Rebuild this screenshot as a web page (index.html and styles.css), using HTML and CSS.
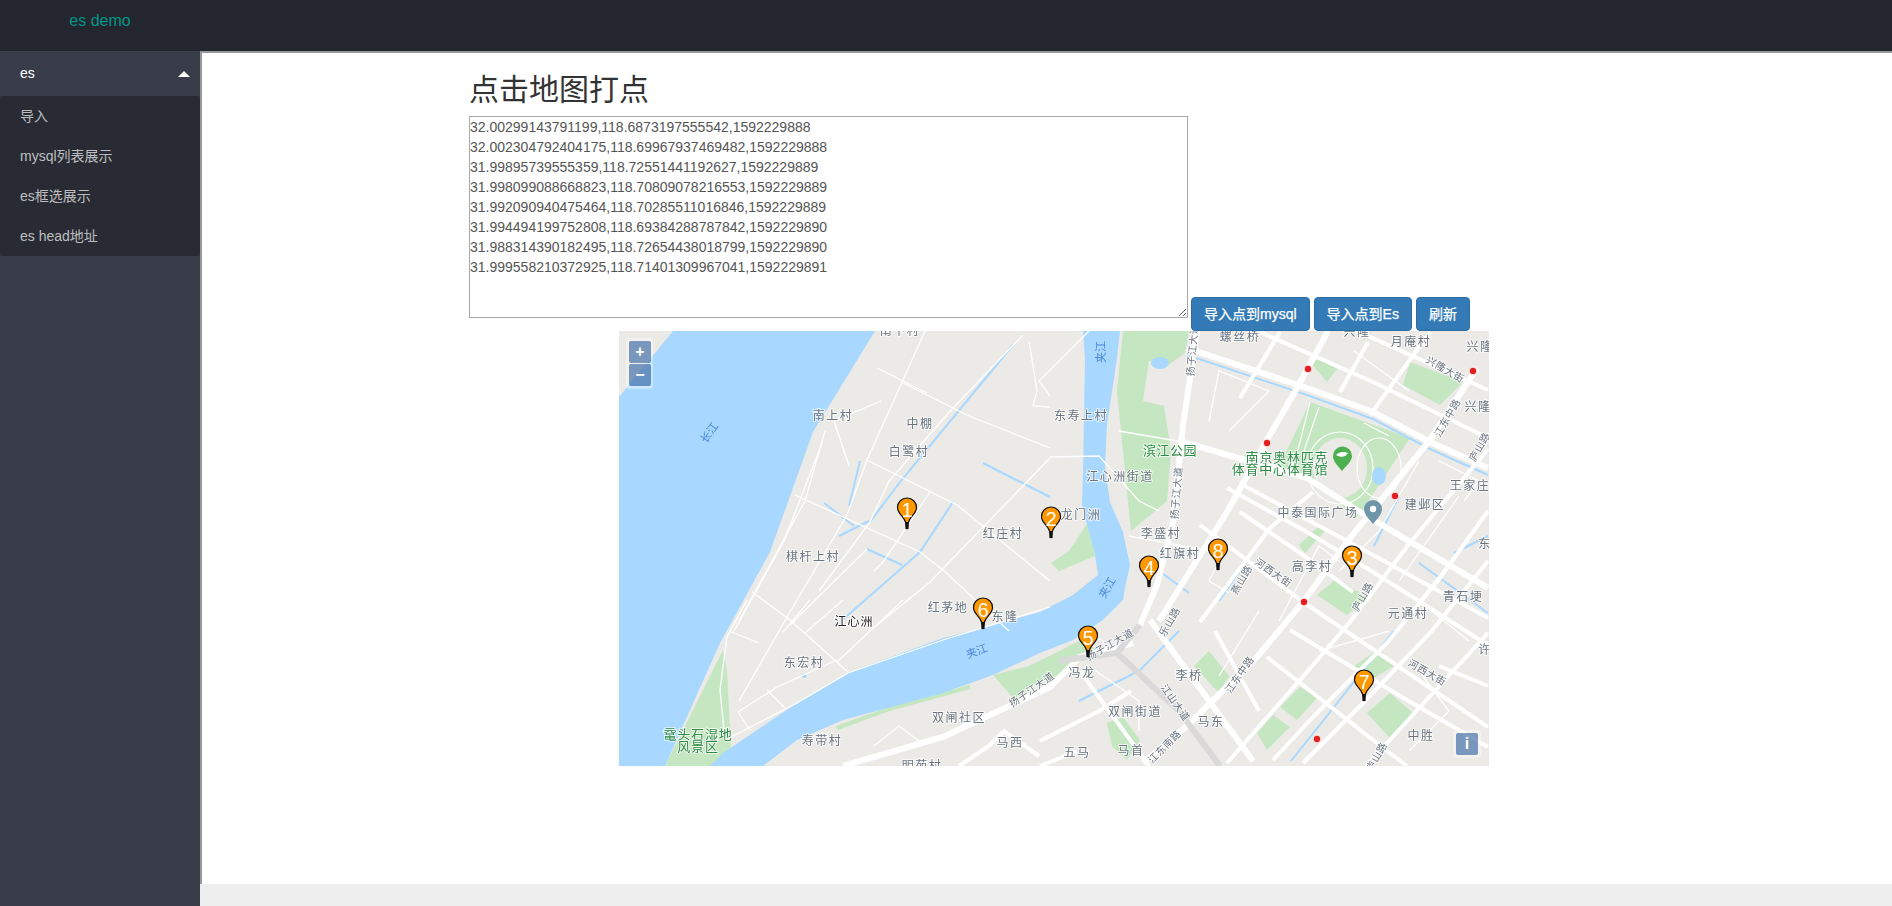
FILE: index.html
```html
<!DOCTYPE html>
<html>
<head>
<meta charset="utf-8">
<title>es demo</title>
<link rel="stylesheet" href="styles.css">
</head>
<body>
<div class="header">
  <div class="logo">es demo</div>
</div>
<div class="layout">
  <div class="side">
    <div class="nav-title">es<span class="caret"></span></div>
    <ul class="nav-child">
      <li>导入</li>
      <li>mysql列表展示</li>
      <li>es框选展示</li>
      <li>es head地址</li>
    </ul>
  </div>
  <div class="main">
    <div class="content">
      <h2>点击地图打点</h2>
      <div class="form-row">
        <textarea class="points" spellcheck="false">32.00299143791199,118.6873197555542,1592229888
32.002304792404175,118.69967937469482,1592229888
31.99895739555359,118.72551441192627,1592229889
31.998099088668823,118.70809078216553,1592229889
31.992090940475464,118.70285511016846,1592229889
31.994494199752808,118.69384288787842,1592229890
31.988314390182495,118.72654438018799,1592229890
31.999558210372925,118.71401309967041,1592229891</textarea>
        <button class="btn">导入点到mysql</button>
        <button class="btn">导入点到Es</button>
        <button class="btn">刷新</button>
      </div>
      <div class="map">
        <svg class="map-svg" viewBox="0 0 870 435" width="870" height="435">
          <defs>
            <symbol id="pin" overflow="visible">
              <path class="pin-head" d="M0 0L-1.5-7C-3-13-9.5-15-9.5-21.5A9.5 9.5 0 1 1 9.5-21.5C9.5-15 3-13 1.5-7Z"/>
              <path class="pin-tip" d="M-1.6 0V-7H1.6V0Z"/>
            </symbol>
          </defs>
          <rect class="land" width="870" height="435"/>

          <!-- parks -->
          <polygon class="park" points="104,319 46,435 100,435 112,420 108,340"/>
          <polygon class="park" points="504,0 570,0 566,22 548,35 530,30 524,70 545,75 552,120 548,170 512,200 505,130 498,60"/>
          <polygon class="park" points="691,71 791,107 738,187 714,167 661,134"/>
          <polygon class="park" points="374,344 410,335 431,325 431,345 395,368"/>
          <polygon class="park" points="421,330 460,310 478,318 440,345 421,350"/>
          <polygon class="park" points="748,382 771,362 794,382 771,407"/>
          <polygon class="park" points="661,376 681,356 698,367 678,389"/>
          <polygon class="park" points="638,402 654,384 671,396 648,419"/>
          <polygon class="park" points="488,392 504,386 521,409 508,429 493,415"/>
          <polygon class="park" points="698,264 718,247 748,267 728,284"/>
          <polygon class="park" points="784,54 791,31 844,51 821,74"/>
          <polygon class="park" points="691,31 701,28 718,38 708,51"/>
          <polygon class="park" points="590,320 610,345 600,362 575,335"/>
          <polygon class="park" points="735,335 760,318 775,335 750,350"/>
          <polygon class="park" points="680,214 700,195 706,200 686,222"/>
          <polygon class="park" points="470,190 476,225 440,240 432,232 450,220"/>
          <polyline class="park-line" points="218,397 270,378 351,356"/>

          <!-- olympic park paths -->
          <ellipse class="land" cx="721" cy="137" rx="27" ry="30"/>
          <ellipse class="path-ring" cx="721" cy="137" rx="33" ry="36"/>
          <ellipse class="path-ring" cx="760" cy="137" rx="22" ry="30"/>
          <polyline class="path-line" points="691,71 680,115 671,140"/>
          <polyline class="path-line" points="700,76 685,120"/>
          <polyline class="path-line" points="745,92 770,105"/>

          <!-- water -->
          <polygon class="water" points="54,0 256,0 194,101 151,221 111,294 101,312 46,435 0,435 0,66"/>
          <polygon class="water" points="464,0 501,0 498,27 488,94 486,137 491,171 504,201 511,234 506,257 504,269 484,289 454,309 421,322 374,344 324,362 224,389 178,409 144,435 91,435 104,422 178,372 231,341 324,307 364,297 421,281 454,264 479,244 476,224 463,174 464,141 466,27"/>
          <ellipse class="water" cx="541" cy="32" rx="9" ry="6"/>
          <ellipse class="water" cx="760" cy="145" rx="7" ry="9"/>
          <ellipse class="water" cx="185" cy="345" rx="2.5" ry="2"/>
          <polyline class="wt" points="394,14 281,151 251,191"/>
          <polyline class="wt" points="334,171 301,221 221,291"/>
          <polyline class="wt" points="364,132 431,166"/>
          <polyline class="wt" points="241,130 230,175"/>
          <polyline class="wt" points="205,172 235,195"/>
          <polyline class="wt" points="220,205 250,190"/>
          <polyline class="wt" points="248,218 283,234"/>
          <polyline class="wt" points="568,24 688,64 754,88 811,118 869,144"/>
          <polyline class="wt" points="694,161 651,197 600,270"/>
          <polyline class="wt" points="869,205 835,222"/>
          <polyline class="wt" points="780,165 755,215"/>
          <polyline class="wt" points="775,300 700,395 672,430"/>
          <polyline class="wt" points="460,370 520,340 560,300"/>
          <polyline class="wt" points="524,228 570,262"/>
          <polyline class="wt" points="800,232 869,282"/>

          <!-- roads -->
          <g class="r3">
            <polyline points="206,100 186,170 120,290"/>
            <polyline points="200,120 165,210 115,300"/>
            <polyline points="128,269 108,306 101,359 106,409"/>
            <polyline points="106,409 178,372 229,342 324,309 431,276"/>
            <polyline points="306,0 248,129 228,184 171,281 120,370"/>
            <polyline points="404,4 334,77 270,150 251,191 200,260"/>
            <polyline points="176,164 301,221 324,239 390,300"/>
            <polyline points="248,129 338,174 431,250"/>
            <polyline points="284,52 350,85 431,117"/>
            <polyline points="258,37 308,62"/>
            <polyline points="431,127 311,251 258,294"/>
            <polyline points="311,161 264,231 255,240"/>
            <polyline points="248,218 171,294"/>
            <polyline points="133,261 171,289 229,341"/>
            <polyline points="218,331 284,269"/>
            <polyline points="186,302 224,269"/>
            <polyline points="164,301 191,269"/>
            <polyline points="119,381 158,356 218,329"/>
            <polyline points="119,381 131,399"/>
            <polyline points="148,359 166,377"/>
            <polyline points="110,300 140,312"/>
            <polyline points="410,10 418,60 414,75 431,76"/>
            <polyline points="230,135 215,90 262,70"/>
            <polyline points="470,0 420,50 431,65"/>
            <polyline points="431,126 480,125 520,170 540,180"/>
            <polyline points="564,111 500,100"/>
            <polyline points="510,205 590,220"/>
            <polyline points="610,100 650,60 600,40 590,90"/>
            <polyline points="720,230 700,215 660,290"/>
            <polyline points="800,130 760,200 720,240"/>
            <polyline points="840,165 780,250"/>
            <polyline points="640,280 600,345"/>
            <polyline points="700,320 770,300"/>
            <polyline points="800,340 830,380 790,420"/>
            <polyline points="840,220 800,270 850,310"/>
            <polyline points="470,335 520,370 520,400"/>
            <polyline points="460,300 490,312"/>
            <polyline points="255,415 280,395 300,410 340,400"/>
            <polyline points="610,210 590,250 610,262"/>
            <polyline points="735,20 790,60"/>
            <polyline points="820,130 860,150 845,170"/>
          </g>
          <g class="r2">
            <polyline points="621,67 661,1"/>
            <polyline points="721,61 749,11"/>
            <polyline points="751,84 811,1"/>
            <polyline points="641,1 754,51 869,107"/>
            <polyline points="738,0 851,51 869,59"/>
            <polyline points="581,291 651,197 694,161"/>
            <polyline points="608,157 688,201 754,241 869,314"/>
            <polyline points="621,181 684,224 734,261"/>
            <polyline points="624,154 754,224 869,287"/>
            <polyline points="581,194 684,271"/>
            <polyline points="684,271 869,396"/>
            <polyline points="648,326 754,409 788,435"/>
            <polyline points="671,299 788,369 869,416"/>
            <polyline points="869,118 790,213 731,291 681,349 608,432"/>
            <polyline points="869,180 821,247 768,312 698,382 654,429"/>
            <polyline points="869,230 811,302 744,372 684,432"/>
            <polyline points="869,302 768,412 748,434"/>
            <polyline points="458,420 421,435"/>
            <polyline points="461,340 530,435"/>
            <polyline points="421,410 480,380 512,360"/>
            <polyline points="340,435 370,415 385,400 420,425"/>
            <polyline points="596,300 640,380"/>
            <polyline points="869,355 820,335"/>
          </g>
          <g class="r1">
            <polyline points="568,17 688,57 754,81 811,111 869,137"/>
            <polyline points="564,111 688,147 741,181 869,257"/>
            <polyline points="709,0 678,57 648,109 608,181 540,290"/>
            <polyline points="858,37 811,109 731,207 684,271 638,326 571,392 524,432"/>
            <polyline points="531,289 634,430"/>
            <polyline points="578,0 564,94 554,191 538,254 521,294"/>
            <polyline points="224,435 324,406 431,356 461,326 514,312"/>
          </g>
          <polyline class="expressway" points="498,322 560,380 601,435"/>
          <polyline class="expressway" points="521,294 498,322 440,330"/>

          <!-- labels -->
          <g class="lbl">
            <text x="281" y="4">南下村</text>
            <text x="214" y="89">南上村</text>
            <text x="301" y="97">中棚</text>
            <text x="290" y="125">白鹭村</text>
            <text x="194" y="230">棋杆上村</text>
            <text x="384" y="207">红庄村</text>
            <text x="329" y="281">红茅地</text>
            <text x="386" y="290">东隆</text>
            <text x="185" y="336">东宏村</text>
            <text x="203" y="414">寿带村</text>
            <text x="340" y="391">双闸社区</text>
            <text x="391" y="416">马西</text>
            <text x="303" y="439">明苑村</text>
            <text x="621" y="10">螺丝桥</text>
            <text x="738" y="5">兴隆</text>
            <text x="792" y="15">月庵村</text>
            <text x="861" y="20">兴隆</text>
            <text x="462" y="89">东寿上村</text>
            <text x="859" y="80">兴隆</text>
            <text x="501" y="150">江心洲街道</text>
            <text x="851" y="159">王家庄</text>
            <text x="806" y="178">建邺区</text>
            <text x="699" y="186">中泰国际广场</text>
            <text x="462" y="188">龙门洲</text>
            <text x="542" y="207">李盛村</text>
            <text x="561" y="227">红旗村</text>
            <text x="693" y="240">高李村</text>
            <text x="866" y="217">东</text>
            <text x="844" y="270">青石埂</text>
            <text x="789" y="287">元通村</text>
            <text x="463" y="346">冯龙</text>
            <text x="570" y="349">李桥</text>
            <text x="866" y="323">许</text>
            <text x="516" y="385">双闸街道</text>
            <text x="592" y="395">马东</text>
            <text x="802" y="409">中胜</text>
            <text x="458" y="426">五马</text>
            <text x="512" y="424">马首</text>
          </g>
          <g class="lbl lbl-road">
            <text transform="translate(826 39) rotate(30)" y="3">兴隆大街</text>
            <text transform="translate(829 87) rotate(-60)" y="3">江东中路</text>
            <text transform="translate(861 116) rotate(-60)" y="3">庐山路</text>
            <text transform="translate(654 242) rotate(35)" y="3">河西大街</text>
            <text transform="translate(623 249) rotate(-60)" y="3">燕山路</text>
            <text transform="translate(744 266) rotate(-60)" y="3">庐山路</text>
            <text transform="translate(574 19) rotate(-85)" y="3">扬子江大道</text>
            <text transform="translate(558 162) rotate(-85)" y="3">扬子江大道</text>
            <text transform="translate(551 291) rotate(-60)" y="3">乐山路</text>
            <text transform="translate(413 359) rotate(-35)" y="3">扬子江大道</text>
            <text transform="translate(621 344) rotate(-55)" y="3">江东中路</text>
            <text transform="translate(808 342) rotate(30)" y="3">河西大街</text>
            <text transform="translate(556 372) rotate(55)" y="3">江山大道</text>
            <text transform="translate(546 416) rotate(-45)" y="3">江东南路</text>
            <text transform="translate(758 426) rotate(-60)" y="3">庐山路</text>
            <text transform="translate(491 314) rotate(-30)" y="3">扬子江大道</text>
          </g>
          <g class="lbl lbl-river">
            <text transform="translate(91 102) rotate(-55)" y="3">长江</text>
            <text transform="translate(358 321) rotate(-20)" y="3">夹江</text>
            <text transform="translate(483 21) rotate(-90)" y="3">夹江</text>
            <text transform="translate(489 257) rotate(-60)" y="3">夹江</text>
          </g>
          <text class="lbl-dark" x="235" y="295">江心洲</text>
          <g class="lbl lbl-green">
            <text x="79" y="408">鼋头石湿地</text>
            <text x="79" y="420">风景区</text>
            <text x="668" y="131">南京奥林匹克</text>
            <text x="661" y="143">体育中心体育馆</text>
          </g>
          <text class="lbl-park" x="551" y="124">滨江公园</text>

          <!-- poi -->
          <g class="metro">
            <circle cx="689" cy="38" r="3.8"/>
            <circle cx="854" cy="40" r="3.8"/>
            <circle cx="648" cy="112" r="3.8"/>
            <circle cx="776" cy="165" r="3.8"/>
            <circle cx="685" cy="271" r="3.8"/>
            <circle cx="698" cy="408" r="3.8"/>
          </g>
          <path class="poi-green" d="M723 140C718 134 714 130 714 125A9.5 9.5 0 0 1 733 125C733 130 728 134 723 140Z"/>
          <path class="poi-white" d="M717 124C720 121 724 120 729 122C727 126 722 127 717 124Z"/>
          <path class="poi-gray" d="M754 193C749 187 745 183 745 178A9 9 0 0 1 763 178C763 183 759 187 754 193Z"/>
          <circle class="poi-white" cx="754" cy="178" r="3.2"/>

          <!-- markers -->
          <g class="pin" transform="translate(288 198)"><use href="#pin"/><text y="-12">1</text></g>
          <g class="pin" transform="translate(432 207)"><use href="#pin"/><text y="-12">2</text></g>
          <g class="pin" transform="translate(733 246)"><use href="#pin"/><text y="-12">3</text></g>
          <g class="pin" transform="translate(530 256)"><use href="#pin"/><text y="-12">4</text></g>
          <g class="pin" transform="translate(469 326)"><use href="#pin"/><text y="-12">5</text></g>
          <g class="pin" transform="translate(364 298)"><use href="#pin"/><text y="-12">6</text></g>
          <g class="pin" transform="translate(745 370)"><use href="#pin"/><text y="-12">7</text></g>
          <g class="pin" transform="translate(599 239)"><use href="#pin"/><text y="-12">8</text></g>
        </svg>
        <div class="zoom-ctl">
          <button class="map-btn">+</button>
          <button class="map-btn">−</button>
        </div>
        <div class="info-ctl"><button class="map-btn">i</button></div>
      </div>
    </div>
    <div class="footer"></div>
  </div>
</div>
</body>
</html>
```

FILE: styles.css
```css
* {
  box-sizing: border-box;
}

html, body {
  height: 100%;
  margin: 0;
  overflow: hidden;
}

body {
  display: flex;
  flex-direction: column;
  font-family: "Liberation Sans", "Noto Sans CJK SC", sans-serif;
  font-size: 14px;
  color: #333;
  background: #fff;
}

.header {
  height: 51px;
  flex: none;
  background: #23262e;
}

.logo {
  width: 200px;
  height: 42px;
  line-height: 42px;
  text-align: center;
  font-size: 16px;
  color: #009688;
}

.layout {
  flex: 1;
  display: flex;
  min-height: 0;
}

.side {
  width: 200px;
  flex: none;
  background: #393d49;
}

.nav-title {
  height: 45px;
  line-height: 45px;
  padding-left: 20px;
  color: #fff;
  position: relative;
}

.caret {
  position: absolute;
  right: 10px;
  top: 20px;
  border: 6px solid transparent;
  border-top: 0;
  border-bottom-color: #fff;
}

.nav-child {
  list-style: none;
  margin: 0;
  padding: 0;
  background: #282b33;
  border-radius: 2px;
}

.nav-child li {
  height: 40px;
  line-height: 40px;
  padding-left: 20px;
  color: rgba(255, 255, 255, 0.7);
}

.main {
  flex: 1;
  display: flex;
  flex-direction: column;
  min-width: 0;
}

.content {
  flex: 1;
  border-top: 2px solid #999;
  border-left: 2px solid #999;
  padding-left: 267px;
}

h2 {
  margin: 20px 0 10px;
  font-size: 30px;
  font-weight: 400;
  line-height: 33px;
}

.form-row {
  display: flex;
  align-items: flex-end;
}

.points {
  width: 719px;
  height: 202px;
  margin: 0 3px 13px 0;
  padding: 0;
  border: 1px solid #a9a9a9;
  font: 14px/20px "Liberation Sans", sans-serif;
  color: #555;
  outline: none;
}

.btn {
  height: 34px;
  margin-right: 4px;
  padding: 6px 12px;
  border: 1px solid #2e6da4;
  border-radius: 4px;
  background: #337ab7;
  color: #fff;
  font: 14px/20px "Liberation Sans", "Noto Sans CJK SC", sans-serif;
  -webkit-text-stroke: 0.25px #fff;
}

.map {
  position: relative;
  width: 870px;
  height: 435px;
  margin-left: 150px;
  overflow: hidden;
}

.map-svg {
  display: block;
  filter: blur(0.35px);
}

.land {
  fill: #ebeae7;
}

.park {
  fill: #c4e6c0;
}

.park-line {
  fill: none;
  stroke: #c4e6c0;
  stroke-width: 4;
}

.path-ring,
.path-line {
  fill: none;
  stroke: #fff;
  stroke-width: 1.2;
}

.water {
  fill: #a8d8ff;
}

.wt {
  fill: none;
  stroke: #a8d8ff;
  stroke-width: 2;
}

.r1 polyline,
.r2 polyline,
.r3 polyline {
  fill: none;
  stroke: #fff;
}

.r1 polyline {
  stroke-width: 6;
}

.r2 polyline {
  stroke-width: 4;
}

.r3 polyline {
  stroke-width: 1.3;
}

.expressway {
  fill: none;
  stroke: #d9d9d9;
  stroke-width: 6;
}

.lbl text {
  font-size: 12px;
  letter-spacing: 1.5px;
  text-anchor: middle;
  fill: #6a7480;
  stroke: rgba(255, 255, 255, 0.7);
  stroke-width: 2px;
  paint-order: stroke;
}

.lbl .lbl-none {
  stroke: none;
}

.lbl-road text {
  font-size: 10px;
  letter-spacing: 0.5px;
}

.lbl-river text {
  font-size: 11px;
  letter-spacing: 0;
  fill: #4a86d8;
  stroke: none;
}

.lbl-green text {
  font-size: 13px;
  letter-spacing: 0.8px;
  fill: #2e8b46;
}

.lbl-dark {
  font-size: 12px;
  letter-spacing: 1px;
  text-anchor: middle;
  fill: #222;
  stroke: #fff;
  stroke-width: 2px;
  paint-order: stroke;
}

.lbl-park {
  font-size: 13px;
  letter-spacing: 0.5px;
  text-anchor: middle;
  fill: #2e8b46;
  stroke: rgba(255, 255, 255, 0.7);
  stroke-width: 2px;
  paint-order: stroke;
}

.metro circle {
  fill: #e02020;
  stroke: #fff;
  stroke-width: 0.8;
}

.poi-green {
  fill: #4caf50;
}

.poi-gray {
  fill: #6f95ab;
}

.poi-white {
  fill: #fff;
}

.pin-head {
  fill: #ff9800;
  stroke: #111;
  stroke-width: 1.2;
}

.pin-tip {
  fill: #111;
}

.pin text {
  font-family: "Liberation Sans", sans-serif;
  font-size: 20px;
  text-anchor: middle;
  fill: #fff;
}

.zoom-ctl,
.info-ctl {
  position: absolute;
  padding: 2px;
  border-radius: 4px;
  background: rgba(255, 255, 255, 0.4);
}

.zoom-ctl {
  left: 7px;
  top: 7px;
  width: 27px;
}

.info-ctl {
  right: 8px;
  bottom: 8px;
}

.map-btn {
  display: block;
  width: 22px;
  height: 22px;
  margin: 1px;
  padding: 0;
  border: 0;
  border-radius: 2px;
  background: rgba(0, 60, 136, 0.5);
  color: #fff;
  font: bold 16px/20px "Liberation Sans", sans-serif;
}

.footer {
  height: 22px;
  flex: none;
  background: #eee;
}
```
